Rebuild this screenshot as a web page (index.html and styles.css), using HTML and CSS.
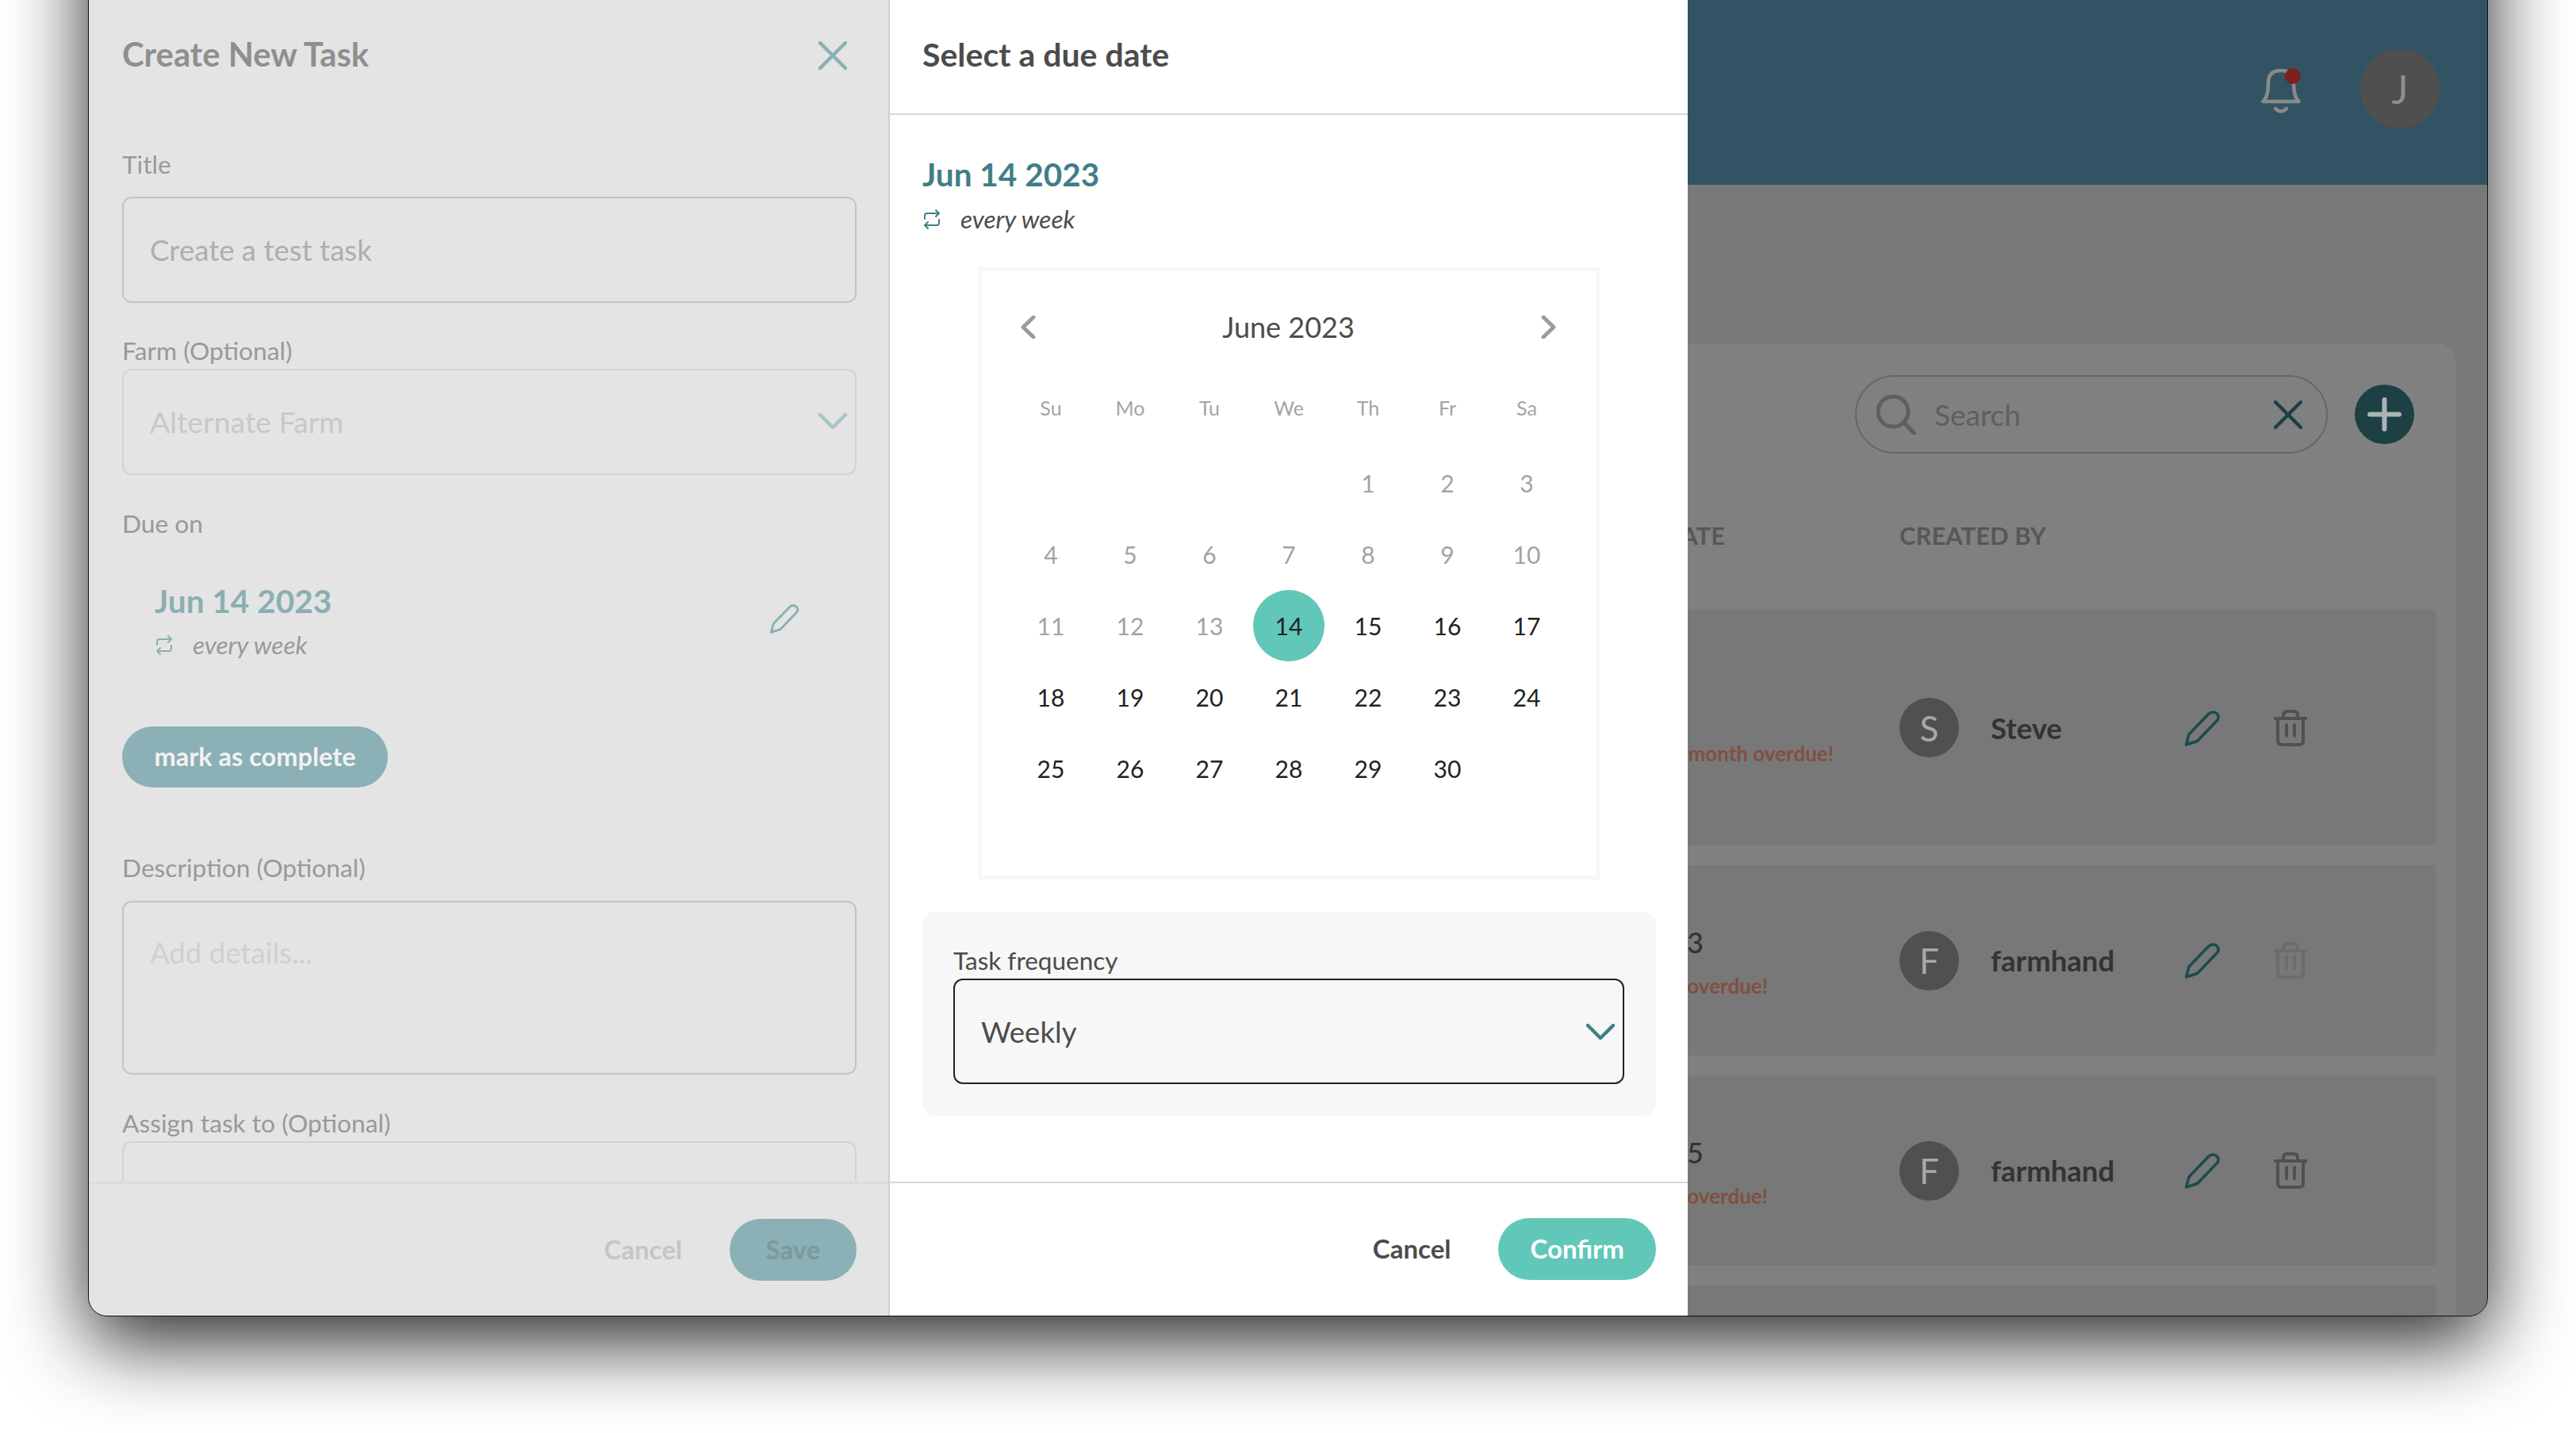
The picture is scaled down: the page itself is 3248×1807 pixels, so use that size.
FILE: index.html
```html
<!DOCTYPE html>
<html lang="en">
<head>
    <meta charset="UTF-8">
    <meta name="viewport" content="width=device-width, initial-scale=1.0">
    <title>Create New Task</title>
    <link rel="stylesheet" href="styles.css">
</head>
<body>
    <svg class="sprite" aria-hidden="true">
        <symbol id="i-pencil" viewBox="0 0 46 46"><path d="M1.5 44 L5 31 L30 5 Q34 1.5 39 4 Q44 8 41 13 L15.5 39.5 Z"/></symbol>
        <symbol id="i-repeat" viewBox="0 0 24 27"><path d="M3 13 V9 Q3 6 6 6 H21 M17 2 L21 6 L17 10 M21 14 V18 Q21 21 18 21 H3 M7 17 L3 21 L7 25"/></symbol>
        <symbol id="i-down" viewBox="0 0 36 20"><path d="M2 2 L18 18 L34 2"/></symbol>
        <symbol id="i-close" viewBox="0 0 36 36"><path d="M2 2 L34 34 M34 2 L2 34"/></symbol>
        <symbol id="i-trash" viewBox="0 0 42 46"><path d="M1 11 H41 M12 11 V7 Q12 2 17 2 H25 Q30 2 30 7 V11 M5 11 V39 Q5 44 10 44 H32 Q37 44 37 39 V11 M16 19 V33 M26 19 V33"/></symbol>
    </svg>

    <div class="window">
        <section class="panel panel-task">
            <div class="panel-head">
                <h2>Create New Task</h2>
                <svg class="icon-close"><use href="#i-close"/></svg>
            </div>
            <div class="panel-body">
                <label class="lbl lbl-title">Title</label>
                <div class="field field-title">Create a test task</div>

                <label class="lbl lbl-farm">Farm (Optional)</label>
                <div class="field field-farm">
                    Alternate Farm
                    <svg class="icon-down"><use href="#i-down"/></svg>
                </div>

                <label class="lbl lbl-due">Due on</label>
                <div class="due-row">
                    <div>
                        <div class="due-date">Jun 14 2023</div>
                        <div class="repeat">
                            <svg class="icon-repeat"><use href="#i-repeat"/></svg>
                            <span>every week</span>
                        </div>
                    </div>
                    <svg class="icon-edit"><use href="#i-pencil"/></svg>
                </div>
                <button class="btn-complete">mark as complete</button>

                <label class="lbl lbl-desc">Description (Optional)</label>
                <div class="field field-desc">Add details...</div>

                <label class="lbl lbl-assign">Assign task to (Optional)</label>
                <div class="field field-assign"></div>
            </div>
            <div class="panel-foot">
                <button class="btn-text">Cancel</button>
                <button class="btn-pill">Save</button>
            </div>
        </section>

        <section class="panel panel-date">
            <div class="panel-head">
                <h2>Select a due date</h2>
            </div>
            <div class="panel-body">
                <div class="due-date">Jun 14 2023</div>
                <div class="repeat">
                    <svg class="icon-repeat"><use href="#i-repeat"/></svg>
                    <span>every week</span>
                </div>

                <div class="calendar">
                    <div class="cal-nav">
                        <svg class="cal-arrow" viewBox="0 0 19 29"><path d="M16 2 L3 14.5 L16 27"/></svg>
                        <span>June 2023</span>
                        <svg class="cal-arrow" viewBox="0 0 19 29"><path d="M3 2 L16 14.5 L3 27"/></svg>
                    </div>
                    <div class="cal-week">
                        <span>Su</span><span>Mo</span><span>Tu</span><span>We</span><span>Th</span><span>Fr</span><span>Sa</span>
                    </div>
                    <div class="cal-days">
                        <span class="day past first">1</span><span class="day past">2</span><span class="day past">3</span>
                        <span class="day past">4</span><span class="day past">5</span><span class="day past">6</span><span class="day past">7</span><span class="day past">8</span><span class="day past">9</span><span class="day past">10</span>
                        <span class="day past">11</span><span class="day past">12</span><span class="day past">13</span><span class="day selected">14</span><span class="day">15</span><span class="day">16</span><span class="day">17</span>
                        <span class="day">18</span><span class="day">19</span><span class="day">20</span><span class="day">21</span><span class="day">22</span><span class="day">23</span><span class="day">24</span>
                        <span class="day">25</span><span class="day">26</span><span class="day">27</span><span class="day">28</span><span class="day">29</span><span class="day">30</span>
                    </div>
                </div>

                <div class="freq">
                    <label class="freq-label">Task frequency</label>
                    <div class="freq-select">
                        Weekly
                        <svg class="icon-down"><use href="#i-down"/></svg>
                    </div>
                </div>
            </div>
            <div class="panel-foot">
                <button class="btn-text">Cancel</button>
                <button class="btn-pill">Confirm</button>
            </div>
        </section>

        <div class="backdrop">
            <header class="topbar">
                <svg class="icon-bell" viewBox="0 0 52 58">
                    <path class="bell-line" d="M2.5 42 H47.5 Q41 36 41 18 Q41 3 25 3 Q9 3 9 18 Q9 36 2.5 42Z"/>
                    <path class="bell-line" d="M18 51 Q25 58 32 51"/>
                    <circle class="bell-dot" cx="40" cy="10" r="10"/>
                </svg>
                <div class="avatar-top">J</div>
            </header>
            <main class="main">
                <div class="card">
                    <div class="toolbar">
                        <div class="search">
                            <svg class="icon-search" viewBox="0 0 50 50"><circle cx="21" cy="21" r="19"/><path d="M35 35 L48 49"/></svg>
                            <span class="search-text">Search</span>
                            <svg class="icon-clear"><use href="#i-close"/></svg>
                        </div>
                        <svg class="icon-add" viewBox="0 0 75 75"><circle class="add-bg" cx="37.5" cy="37.5" r="37.5"/><path class="add-plus" d="M37.5 19 V56 M19 37.5 H56"/></svg>
                    </div>
                    <div class="table-head">
                        <div class="due-col"><div class="head-due">Due date</div></div>
                        <div class="head-by">Created by</div>
                    </div>
                    <div class="task-row row-tall">
                        <div class="due-col">
                            <div class="row-date">&nbsp;</div>
                            <div class="row-late late-long">1 month overdue!</div>
                        </div>
                        <div class="avatar">S</div>
                        <div class="who">Steve</div>
                        <svg class="icon-pen"><use href="#i-pencil"/></svg>
                        <svg class="icon-trash"><use href="#i-trash"/></svg>
                    </div>
                    <div class="task-row">
                        <div class="due-col">
                            <div class="row-date">Mar 13</div>
                            <div class="row-late late-short">3 months overdue!</div>
                        </div>
                        <div class="avatar">F</div>
                        <div class="who">farmhand</div>
                        <svg class="icon-pen"><use href="#i-pencil"/></svg>
                        <svg class="icon-trash off"><use href="#i-trash"/></svg>
                    </div>
                    <div class="task-row">
                        <div class="due-col">
                            <div class="row-date">Mar 15</div>
                            <div class="row-late late-short">3 months overdue!</div>
                        </div>
                        <div class="avatar">F</div>
                        <div class="who">farmhand</div>
                        <svg class="icon-pen"><use href="#i-pencil"/></svg>
                        <svg class="icon-trash"><use href="#i-trash"/></svg>
                    </div>
                    <div class="task-row"></div>
                </div>
            </main>
        </div>
    </div>
</body>
</html>
```

FILE: styles.css
```css
* {
    box-sizing: border-box;
}
html, body {
    height: 100%;
}
body {
    margin: 0;
    padding-left: 111px;
    background-color: #fff;
    font-family: "Lato", "Open Sans", sans-serif;
    overflow: hidden;
}
.sprite {
    display: none;
}
svg {
    display: block;
    flex: none;
    fill: none;
    stroke-linecap: round;
    stroke-linejoin: round;
}
button {
    font-family: inherit;
    border: none;
    cursor: pointer;
}

/* Window */
.window {
    display: flex;
    width: 3026px;
    height: 1860px;
    margin-top: -200px;
    padding-top: 199px;
    border: 1px solid #111;
    border-radius: 24px;
    overflow: hidden;
    box-shadow: 0 32px 100px rgba(0,0,0,0.85);
    background-color: #797979;
}
.panel {
    display: flex;
    flex-direction: column;
    flex: none;
}
.panel-task {
    width: 1010px;
    background-color: #e4e4e4;
    border-right: 2px solid #cfcfcf;
    color: #999;
}
.panel-date {
    width: 1006px;
    background-color: #fff;
    color: #4c4c4c;
}
.panel-head {
    display: flex;
    justify-content: space-between;
    align-items: center;
    flex: none;
    height: 145px;
    padding-bottom: 7px;
    border-bottom: 2px solid #d8d8d8;
}
.panel-head h2 {
    margin: 0;
    font-size: 41px;
    font-weight: 700;
}
.panel-task .panel-head h2 {
    font-size: 41.8px;
}
.panel-task .panel-head {
    padding-left: 42px;
    padding-right: 12px;
    border-bottom-color: #e4e4e4;
    color: #8f8f8f;
}
.panel-date .panel-head {
    padding-left: 41px;
    color: #4c4c4c;
}
.panel-body {
    flex: 1;
    min-height: 0;
    overflow: hidden;
}
.panel-task .panel-body {
    padding: 0 40px 0 42px;
}
.panel-date .panel-body {
    padding: 0 40px 0 41px;
}
.panel-foot {
    display: flex;
    justify-content: flex-end;
    align-items: flex-start;
    gap: 60px;
    flex: none;
    height: 169px;
    padding: 44px 40px 0 0;
    border-top: 2px solid #d8d8d8;
}
.panel-task .panel-foot {
    border-top: 3px solid #dcdcdc;
}

/* Left form */
.icon-close {
    width: 36px;
    height: 36px;
    margin-right: 40px;
    margin-top: 4px;
    stroke: #8aafb2;
    stroke-width: 4.5px;
}
.lbl {
    display: block;
    padding-bottom: 4px;
    font-size: 31.7px;
    line-height: 36px;
}
.lbl-title { margin-top: 44px; }
.lbl-farm { margin-top: 42px; }
.lbl-due { margin-top: 43px; }
.lbl-desc { margin-top: 83px; }
.lbl-assign { margin-top: 43px; }
.field {
    position: relative;
    display: flex;
    align-items: center;
    width: 926px;
    height: 134px;
    padding: 0 33px;
    border: 2.5px solid #c4c4c4;
    border-radius: 12px;
    font-size: 36.6px;
}
.field-title {
    margin-top: 19px;
    color: #aeaeae;
}
.field-farm {
    justify-content: space-between;
    margin-top: 1px;
    padding: 0 10px 2px 33px;
    border-color: #d2d2d2;
    color: #c8c8c8;
    font-size: 37.4px;
}
.field-farm .icon-down {
    stroke: #a9c4c6;
}
.field-desc {
    align-items: flex-start;
    height: 219px;
    margin-top: 20px;
    padding-top: 41px;
    color: #d0d0d0;
}
.field-assign {
    margin-top: 1px;
    border-color: #d2d2d2;
}
.icon-down {
    width: 36px;
    height: 20px;
    stroke-width: 4.5px;
}
.due-row {
    display: flex;
    justify-content: space-between;
    align-items: center;
    margin-top: 48px;
    padding: 0 71px 0 41px;
}
.due-date {
    font-size: 40.5px;
    font-weight: 700;
    line-height: 56px;
}
.repeat {
    display: flex;
    align-items: center;
    height: 40px;
    gap: 24px;
    font-size: 31.5px;
    font-style: italic;
}
.panel-task .due-date {
    color: #8aafb2;
}
.panel-task .repeat {
    margin-top: 7px;
}
.panel-task .icon-repeat {
    stroke: #8aafb2;
}
.panel-date .due-date {
    margin-top: 47px;
    color: #3f7f86;
}
.panel-date .repeat {
    margin-top: 8px;
}
.panel-date .icon-repeat {
    stroke: #3f7f86;
}
.icon-repeat {
    width: 24px;
    height: 27px;
    stroke-width: 2px;
}
.icon-edit {
    width: 38px;
    height: 38px;
    margin-top: -3px;
    stroke: #8aafb2;
    stroke-width: 3.5px;
}
.btn-complete {
    display: block;
    width: 335px;
    height: 77px;
    margin-top: 83px;
    padding-bottom: 3px;
    border-radius: 39px;
    background-color: #8bb0b5;
    color: #f2f2f2;
    font-size: 32.5px;
    font-weight: 700;
}
.btn-text {
    height: 78px;
    padding: 0 0 2px;
    background: none;
    font-size: 33px;
    font-weight: 700;
    color: #4c4c4c;
}
.btn-pill {
    height: 78px;
    padding: 0 40px 2px;
    border-radius: 39px;
    background-color: #61c8b9;
    color: #fff;
    font-size: 33px;
    font-weight: 700;
}
.panel-task .btn-text {
    color: #c5c5c5;
}
.panel-task .btn-pill {
    width: 160px;
    padding: 0 0 2px;
    background-color: #8bb0b5;
    color: #7b9a9d;
}

/* Calendar */
.calendar {
    width: 784px;
    height: 772px;
    margin: 41px 0 0 70px;
    border: 5px solid #f7f7f7;
}
.cal-nav {
    display: flex;
    justify-content: space-between;
    align-items: center;
    height: 140px;
    padding: 0 50px 0 49px;
    font-size: 36px;
    color: #4c4c4c;
}
.cal-arrow {
    width: 19px;
    height: 29px;
    stroke: #9b9b9b;
    stroke-width: 5px;
}
.cal-week,
.cal-days {
    display: grid;
    grid-template-columns: repeat(7, 100px);
    justify-content: center;
    text-align: center;
}
.cal-week {
    height: 64px;
    align-items: center;
    margin-bottom: 18px;
    font-size: 25px;
    color: #a5a5a5;
}
.cal-days {
    grid-auto-rows: 90px;
    font-size: 30px;
    color: #222;
}
.day {
    display: flex;
    justify-content: center;
    align-items: center;
    width: 90px;
    height: 90px;
    justify-self: center;
    border-radius: 50%;
}
.day.first {
    grid-column-start: 5;
}
.day.past {
    color: #a3a3a3;
}
.day.selected {
    background-color: #61c8b9;
}

/* Frequency */
.freq {
    margin-top: 41px;
    padding: 43px 40px 40px 39px;
    border-radius: 16px;
    background-color: #f7f7f7;
}
.freq-label {
    display: block;
    padding-bottom: 4px;
    font-size: 31.5px;
    line-height: 36px;
}
.freq-select {
    display: flex;
    justify-content: space-between;
    align-items: center;
    height: 133px;
    margin-top: 1px;
    padding: 0 10px 0 33px;
    border: 2.5px solid #222;
    border-radius: 12px;
    font-size: 36.6px;
}
.freq-select .icon-down {
    stroke: #3f7f86;
}

/* Dashboard behind the drawers */
.backdrop {
    display: flex;
    flex-direction: column;
    flex: 1;
    min-width: 0;
    overflow: hidden;
}
.topbar {
    display: flex;
    justify-content: flex-end;
    align-items: center;
    gap: 73px;
    flex: none;
    height: 233px;
    padding: 0 60px 9px 0;
    background-color: #325364;
}
.icon-bell {
    width: 52px;
    height: 58px;
    margin-top: 6px;
}
.bell-line {
    stroke: #8a8a8a;
    stroke-width: 4.5px;
}
.bell-dot {
    fill: #7e1f1e;
}
.avatar-top {
    display: flex;
    justify-content: center;
    align-items: center;
    width: 100px;
    height: 100px;
    border-radius: 50%;
    background-color: #4f4f4f;
    color: #8f8f8f;
    font-size: 50px;
}
.main {
    flex: 1;
    min-height: 0;
    padding: 200px 40px 0 0;
    background-color: #797979;
}
.card {
    height: 100%;
    overflow: hidden;
    padding: 40px 25px 0 0;
    border-radius: 0 24px 0 0;
    background-color: #808080;
}
.toolbar {
    display: flex;
    justify-content: flex-end;
    align-items: center;
    gap: 34px;
    height: 99px;
    padding-right: 27px;
}
.search {
    display: flex;
    align-items: center;
    width: 596px;
    height: 99px;
    padding: 0 30px 0 25px;
    border: 2.5px solid #666;
    border-radius: 50px;
}
.icon-search {
    width: 50px;
    height: 50px;
    stroke: #5f5f5f;
    stroke-width: 5px;
}
.search-text {
    flex: 1;
    margin-left: 23px;
    font-size: 37px;
    color: #5f5f5f;
}
.icon-clear {
    width: 36px;
    height: 36px;
    stroke: #1c4044;
    stroke-width: 4.5px;
}
.icon-add {
    width: 75px;
    height: 75px;
}
.add-bg {
    fill: #1c4044;
}
.add-plus {
    stroke: #a9b4b4;
    stroke-width: 6px;
}
.table-head {
    display: flex;
    align-items: center;
    height: 197px;
    padding-top: 8px;
    font-size: 31px;
    font-weight: 700;
    text-transform: uppercase;
    color: #575757;
}
.due-col {
    flex: none;
    width: 267px;
    white-space: nowrap;
    overflow: hidden;
}
.head-due,
.row-date,
.row-late {
    display: flex;
    justify-content: flex-end;
}
.head-due {
    padding-right: 220px;
}
.task-row {
    display: flex;
    align-items: center;
    height: 240px;
    margin-bottom: 25px;
    background-color: #787878;
}
.row-tall {
    height: 297px;
}
.task-row .due-col {
    margin-top: 9px;
}
.row-date {
    padding-right: 247px;
    font-size: 36px;
    font-weight: 500;
    line-height: 40px;
    color: #333;
}
.row-late {
    margin-top: 15px;
    font-size: 26px;
    font-weight: 700;
    line-height: 40px;
    color: #824f40;
}
.late-long {
    padding-right: 83px;
}
.late-short {
    padding-right: 166px;
}
.avatar {
    display: flex;
    justify-content: center;
    align-items: center;
    flex: none;
    width: 75px;
    height: 75px;
    border-radius: 50%;
    background-color: #505050;
    color: #a8a8a8;
    font-size: 44px;
}
.who {
    flex: none;
    width: 245px;
    margin-left: 40px;
    font-size: 36.5px;
    font-weight: 700;
    color: #333;
}
.icon-pen {
    width: 46px;
    height: 46px;
    stroke: #1c4a4f;
    stroke-width: 3.5px;
}
.icon-trash {
    width: 42px;
    height: 46px;
    margin-left: 66px;
    stroke: #505050;
    stroke-width: 4px;
}
.icon-trash.off {
    stroke: #6c6c6c;
}
```
